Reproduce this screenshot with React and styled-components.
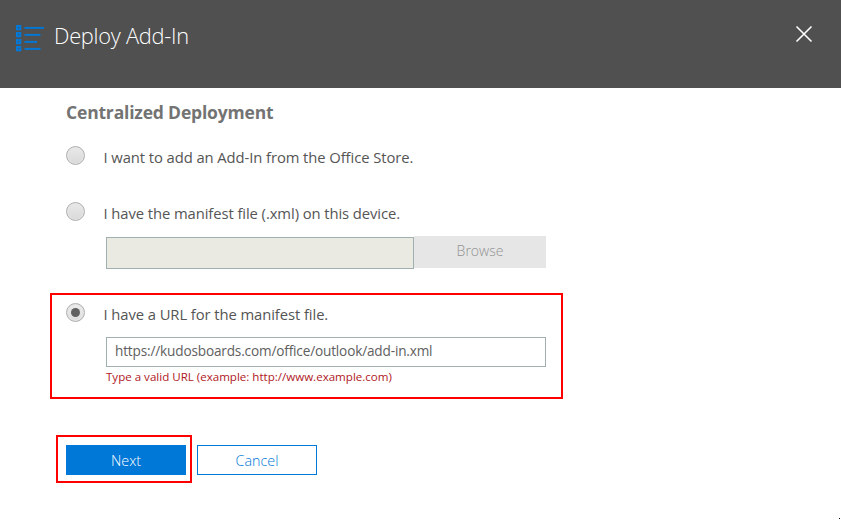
import React, { useState } from 'react';
import styled, { createGlobalStyle } from 'styled-components';

const GlobalStyle = createGlobalStyle`
  * { box-sizing: border-box; }
  body {
    margin: 0;
    background: #fff;
    color: #555;
    font-family: "Open Sans", "Noto Sans", sans-serif;
  }
  button, input { font-family: inherit; margin: 0; border-radius: 0; }
`;

const Dialog = styled.div`
  display: flex;
  flex-direction: column;
  height: 520px;
  overflow: hidden;
`;

const Header = styled.header`
  display: flex;
  align-items: flex-start;
  height: 88px;
  flex-shrink: 0;
  padding: 20px 28px 0 15px;
  background: #505050;
`;

const HeaderIcon = styled.svg`
  width: 30px;
  height: 28px;
  margin-top: 4px;
  flex-shrink: 0;
`;

const Title = styled.h1`
  margin: 1px 0 0 9px;
  flex: 1;
  font-size: 21.8px;
  font-weight: 330;
  line-height: 30px;
  letter-spacing: -0.25px;
  color: #fff;
`;

const CloseButton = styled.button`
  display: flex;
  width: 18px;
  height: 18px;
  margin-top: 5px;
  padding: 0;
  border: 0;
  background: none;
`;

const Form = styled.main`
  display: flex;
  flex-direction: column;
  flex: 1;
  padding: 12px 0 0 50px;
`;

const Heading = styled.h2`
  margin: 0 0 0 16px;
  height: 25px;
  font-size: 17.5px;
  font-weight: 700;
  line-height: 24px;
  letter-spacing: -0.18px;
  color: #737373;
`;

const Option = styled.label`
  display: flex;
  align-items: flex-start;
  gap: 18.5px;
  height: 24px;
  margin-top: ${({ $top }) => $top}px;
  padding-left: ${({ $indent }) => $indent}px;
`;

const Radio = styled.input`
  appearance: none;
  display: grid;
  place-items: center;
  flex-shrink: 0;
  width: 19px;
  height: 19px;
  border: 1px solid #b0b0b0;
  border-radius: 50% !important;
  background: linear-gradient(#e9e9e9, #d9d9d9);
  box-shadow: inset 0 0 0 1px #e4e4e4;

  &:checked {
    background: linear-gradient(#eee, #dcdcdc);
  }

  &:checked::before {
    content: "";
    width: 9px;
    height: 9px;
    border-radius: 50%;
    background: #606060;
  }
`;

const OptionText = styled.span`
  font-size: 14.8px;
  font-weight: 385;
  line-height: 22px;
  letter-spacing: -0.08px;
`;

const FileRow = styled.div`
  display: flex;
  margin: 10px 0 0 56px;
`;

const FileField = styled.div`
  width: 308px;
  height: 32px;
  margin-top: 1px;
  border: 1px solid #a0afaf;
  background: #eaeae2;
`;

const BrowseButton = styled.button`
  width: 132px;
  height: 32px;
  padding: 0 0 4px;
  border: 0;
  background: #e6e6e6;
  color: #929292;
  font-size: 14px;
  font-weight: 320;
`;

const Highlight = styled.div`
  border: 2px solid #f00;
`;

const UrlHighlight = styled(Highlight)`
  width: 513px;
  height: 106px;
  margin-top: 24px;
`;

const UrlField = styled.input`
  display: block;
  width: 440px;
  height: 30px;
  margin: 10px 0 0 54px;
  padding: 0 8px 4px;
  border: 1px solid #a0afaf;
  outline: none;
  background: #fff;
  color: #606060;
  font-size: 13.6px;
  font-weight: 370;
  letter-spacing: -0.16px;
`;

const ErrorText = styled.p`
  margin: 1px 0 0 54px;
  color: #b0181e;
  font-size: 11.6px;
  line-height: 18px;
  letter-spacing: -0.02px;
`;

const Actions = styled.div`
  display: flex;
  align-items: center;
  gap: 5px;
  margin: 36px 0 0 6px;
`;

const NextHighlight = styled(Highlight)`
  padding: 8px 4px 6px 8px;
`;

const ActionButton = styled.button`
  display: block;
  width: 120px;
  height: 30px;
  margin-top: ${({ $primary }) => ($primary ? 0 : 2)}px;
  padding: 2px 0 0;
  border: 1px solid #0078d7;
  background: ${({ $primary }) => ($primary ? '#0078d7' : '#fff')};
  color: ${({ $primary }) => ($primary ? '#fff' : '#0078d7')};
  font-size: 14.3px;
  font-weight: 320;
  line-height: 26px;
`;

const CornerDot = styled.span`
  align-self: flex-end;
  width: 1px;
  height: 1px;
  margin: auto 1px 1px 0;
  flex-shrink: 0;
  background: #000;
`;

const ICON_ROWS = [
  { y: 1, end: 29 },
  { y: 8, end: 25.5 },
  { y: 15, end: 22 },
  { y: 22, end: 25.5 },
];

function ListIcon() {
  return (
    <HeaderIcon viewBox="0 0 30 28" aria-hidden="true">
      {ICON_ROWS.map(({ y, end }) => (
        <g key={y}>
          <rect x="1" y={y} width="5.3" height="5.3" fill="#0078d7" />
          <rect x="3" y={y + 2} width="1.3" height="1.3" fill="#3c5870" />
          <path d={`M9.5 ${y + 2.9}H${end}`} stroke="#0078d7" strokeWidth="1.9" />
        </g>
      ))}
    </HeaderIcon>
  );
}

function RadioOption({ value, selected, onSelect, top, indent = 16, children }) {
  return (
    <Option $top={top} $indent={indent}>
      <Radio type="radio" name="source" checked={selected === value} onChange={() => onSelect(value)} />
      <OptionText>{children}</OptionText>
    </Option>
  );
}

export default function App() {
  const [source, setSource] = useState('url');
  const [url, setUrl] = useState('https://kudosboards.com/office/outlook/add-in.xml');

  return (
    <Dialog>
      <GlobalStyle />
      <Header>
        <ListIcon />
        <Title>Deploy Add-In</Title>
        <CloseButton aria-label="Close">
          <svg width="18" height="18" viewBox="0 0 18 18">
            <path d="M1.5 1.5l15 15M16.5 1.5l-15 15" stroke="#fff" strokeWidth="1.6" />
          </svg>
        </CloseButton>
      </Header>
      <Form>
        <Heading>Centralized Deployment</Heading>
        <RadioOption value="store" selected={source} onSelect={setSource} top={21}>
          I want to add an Add-In from the Office Store.
        </RadioOption>
        <RadioOption value="file" selected={source} onSelect={setSource} top={32}>
          I have the manifest file (.xml) on this device.
        </RadioOption>
        <FileRow>
          <FileField />
          <BrowseButton disabled>Browse</BrowseButton>
        </FileRow>
        <UrlHighlight>
          <RadioOption value="url" selected={source} onSelect={setSource} top={8} indent={14}>
            I have a URL for the manifest file.
          </RadioOption>
          <UrlField value={url} onChange={(e) => setUrl(e.target.value)} />
          <ErrorText>Type a valid URL (example: http://www.example.com)</ErrorText>
        </UrlHighlight>
        <Actions>
          <NextHighlight>
            <ActionButton $primary>Next</ActionButton>
          </NextHighlight>
          <ActionButton>Cancel</ActionButton>
        </Actions>
        <CornerDot />
      </Form>
    </Dialog>
  );
}
